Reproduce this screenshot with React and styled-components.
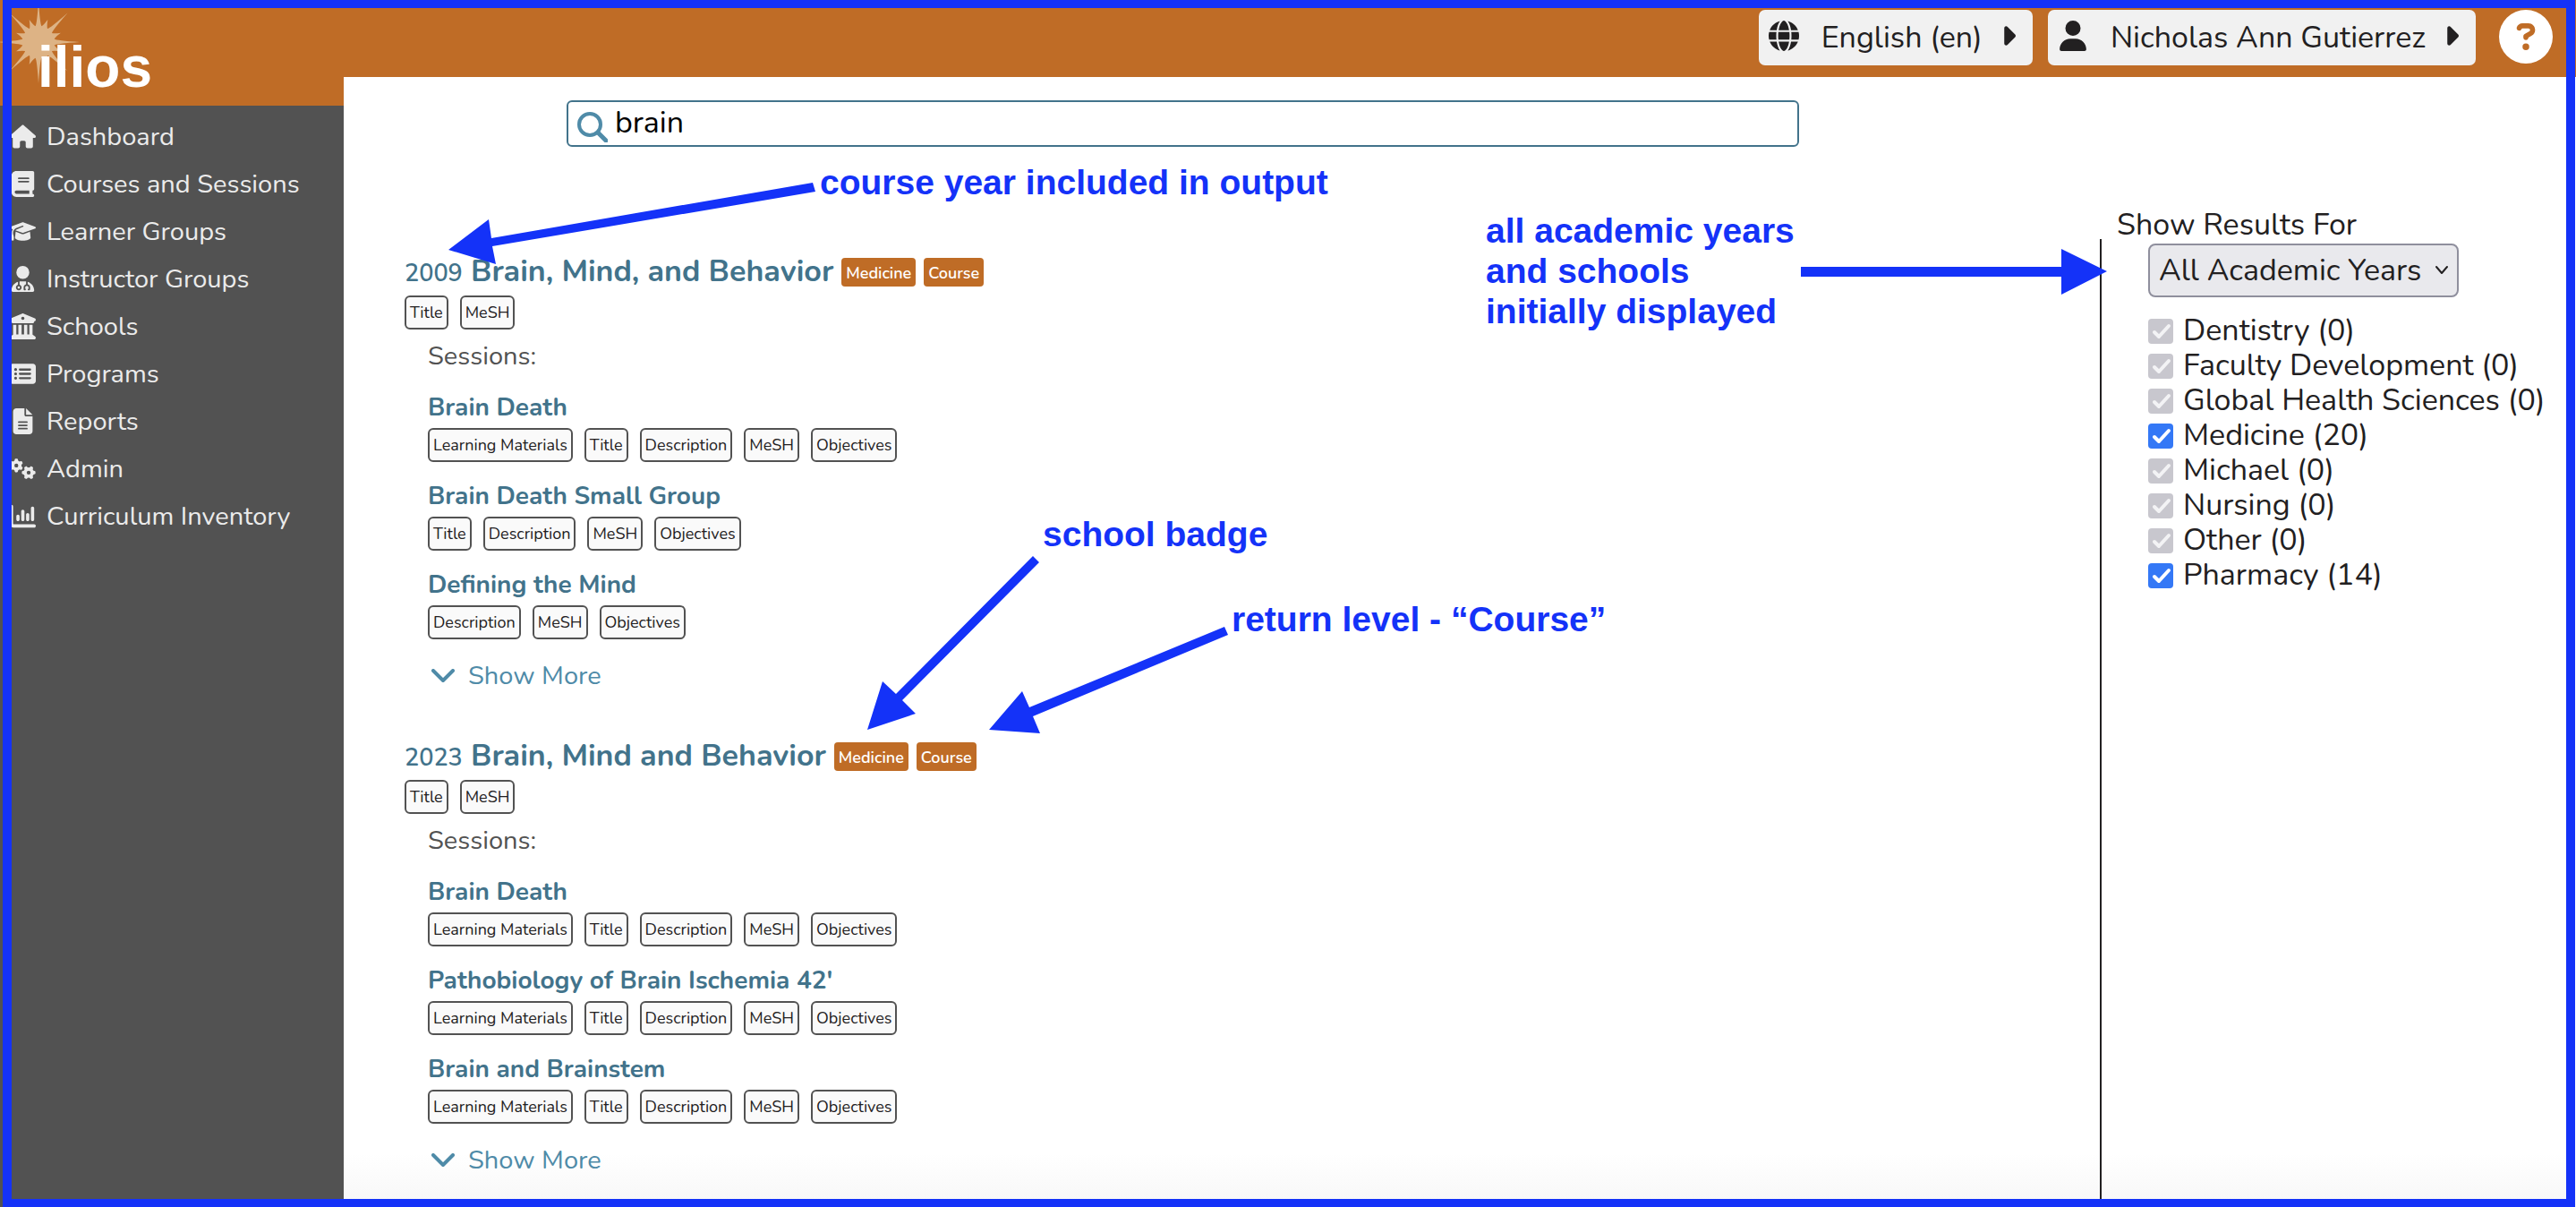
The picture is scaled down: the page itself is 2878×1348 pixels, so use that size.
import React from "react";
import styled, { createGlobalStyle } from "styled-components";
import {
  FaHouse,
  FaBook,
  FaGraduationCap,
  FaUserDoctor,
  FaBuildingColumns,
  FaRectangleList,
  FaFileLines,
  FaGears,
  FaChartColumn,
  FaGlobe,
  FaUser,
  FaCaretRight,
  FaCircleQuestion,
} from "react-icons/fa6";

const colors = {
  orange: "#bf6c26",
  sidebar: "#525252",
  link: "#42738b",
  linkLight: "#4f8ba8",
  text: "#222021",
  note: "#1432f8",
};

const GlobalStyle = createGlobalStyle`
  *, *::before, *::after { box-sizing: border-box; }
  body {
    margin: 0;
    background: #fff;
    color: ${colors.text};
    font-family: "Nunito", "Lato", sans-serif;
    font-size: 34px;
  }
  h1, h2, h3, p, ul { margin: 0; padding: 0; font-weight: 400; }
  ul { list-style: none; }
  a { color: inherit; text-decoration: none; }
  button, input, select { font: inherit; color: inherit; }
`;

const Page = styled.div`
  position: relative;
  display: grid;
  grid-template-columns: 384px minmax(0, 1fr);
  min-height: 100vh;
  overflow: hidden;
`;

/* Sidebar */

const Sidebar = styled.aside`
  background: ${colors.sidebar};
`;

const Logo = styled.a`
  position: relative;
  display: block;
  height: 118px;
  padding: 43px 0 0 42px;
  background: ${colors.orange};
  color: #fff;
  font: bold 64px/64px "Liberation Sans", Arial, sans-serif;
`;

const Sun = styled.svg`
  position: absolute;
  top: 0;
  left: 0;
  fill: #ddb385;
`;

const LogoText = styled.span`
  position: relative;
`;

const NavList = styled.ul`
  padding: 8px 0 0 8px;
`;

const NavLink = styled.a`
  display: flex;
  align-items: center;
  gap: 10px;
  height: 53px;
  color: #ebebeb;
  font-size: 29px;
  line-height: 53px;
  white-space: nowrap;
`;

const NavIcon = styled.span`
  display: flex;
  justify-content: center;
  width: 34px;
`;

/* Header */

const Main = styled.div`
  display: flex;
  flex-direction: column;
  background: linear-gradient(#fff, #f7f7f7) bottom / 100% 60px no-repeat;
`;

const Header = styled.header`
  display: flex;
  justify-content: flex-end;
  align-items: flex-start;
  gap: 17px;
  height: 86px;
  padding: 11px 26px 0 0;
  background: ${colors.orange};
`;

const MenuButton = styled.button`
  display: flex;
  align-items: center;
  height: 62px;
  padding: 0 19px 0 10px;
  border: 0;
  border-radius: 7px;
  background: #f1f1f1;
  white-space: nowrap;

  svg { margin-bottom: 4px; }
`;

const MenuIcon = styled.span`
  display: flex;
  justify-content: center;
  width: 36px;
  margin-right: 24px;
`;

const MenuLabel = styled.span`
  margin-right: 20px;
`;

const Caret = styled(FaCaretRight)`
  width: 17px;
  height: 34px;
`;

const HelpButton = styled.button`
  display: flex;
  margin-left: 9px;
  padding: 0;
  border: 0;
  background: none;
  color: #fff;
`;

/* Search */

const SearchForm = styled.form`
  padding: 26px 868px 0 249px;
`;

const SearchBox = styled.label`
  display: flex;
  align-items: center;
  gap: 8px;
  height: 52px;
  padding-left: 10px;
  border: 2px solid ${colors.link};
  border-radius: 6px;

  svg { flex: none; margin-top: 8px; }
`;

const SearchInput = styled.input`
  flex: 1;
  min-width: 0;
  height: 46px;
  margin-bottom: 2px;
  padding: 0;
  border: 0;
  outline: 0;
  background: none;
  color: #000;
  font-size: 34px;
`;

const Content = styled.div`
  display: flex;
  flex: 1;
`;

/* Results */

const Results = styled.main`
  display: flex;
  flex: 1;
  flex-direction: column;
  gap: 51px;
  min-width: 0;
  padding: 120px 0 0 68px;
`;

const CourseHeading = styled.div`
  display: flex;
  align-items: center;
  gap: 9px;
  height: 40px;
  margin-bottom: 6px;
  white-space: nowrap;
`;

const CourseTitle = styled.h2`
  color: ${colors.link};
  font-size: 34px;
  font-weight: 700;
  line-height: 40px;
`;

const Year = styled.span`
  font-size: 27px;
  font-weight: 600;
`;

const Badge = styled.span`
  height: 32px;
  padding: 0 5px;
  border-radius: 4px;
  background: ${colors.orange};
  color: #fff;
  font-size: 18px;
  font-weight: 600;
  line-height: 34px;
`;

const TagList = styled.ul`
  display: flex;
  gap: 13px;
`;

const Tag = styled.li`
  height: 38px;
  padding: 0 4px;
  border: 2px solid ${colors.sidebar};
  border-radius: 6px;
  background: #fafafa;
  font-size: 18px;
  line-height: 34px;
  white-space: nowrap;
`;

const Sessions = styled.div`
  display: flex;
  flex-direction: column;
  align-items: flex-start;
  gap: 20px;
  padding: 11px 0 0 26px;
`;

const SessionsLabel = styled.p`
  color: ${colors.sidebar};
  font-size: 29px;
  line-height: 38px;
`;

const SessionTitle = styled.h3`
  margin-bottom: 5px;
  color: ${colors.link};
  font-size: 28px;
  font-weight: 700;
  line-height: 36px;
`;

const ShowMore = styled.button`
  display: flex;
  align-items: center;
  gap: 15px;
  height: 40px;
  padding: 2px 0 0 4px;
  border: 0;
  background: none;
  color: ${colors.linkLight};
  font-size: 29px;
  line-height: 38px;
`;

/* Filters */

const Filters = styled.aside`
  display: flex;
  flex-direction: column;
  flex: 0 0 532px;
  padding-top: 71px;
`;

const FiltersTitle = styled.h2`
  padding-left: 19px;
  font-size: 34px;
  line-height: 32px;
`;

const FiltersPanel = styled.div`
  flex: 1;
  padding: 5px 0 0 52px;
  border-left: 2px solid ${colors.text};
`;

const SelectBox = styled.label`
  display: inline-grid;
  align-items: center;
  width: 347px;
  margin-bottom: 18px;

  > * { grid-area: 1 / 1; }
  svg { justify-self: end; margin-right: 11px; pointer-events: none; }
`;

const YearSelect = styled.select`
  appearance: none;
  width: 100%;
  height: 60px;
  padding: 0 40px 0 10px;
  border: 2px solid #8f8f9d;
  border-radius: 8px;
  background: #e9e9ed;
  font-size: 34px;
`;

const SchoolLabel = styled.label`
  display: flex;
  align-items: center;
  gap: 11px;
  height: 39px;
  line-height: 39px;
  white-space: nowrap;
`;

const CheckCell = styled.span`
  display: grid;
  width: 28px;
  height: 28px;

  > * { grid-area: 1 / 1; }
  svg { pointer-events: none; }
`;

const Checkbox = styled.input`
  appearance: none;
  width: 28px;
  height: 28px;
  margin: 0;
  border-radius: 4px;
  background: #3478f6;

  &:disabled { background: #c8c7ce; }
`;

/* Notes drawn over the page */

const Frame = styled.div`
  position: absolute;
  inset: 0 1px 0 3px;
  border: solid ${colors.note};
  border-width: 9px 10px;
  pointer-events: none;
`;

const Arrows = styled.svg`
  position: absolute;
  top: 0;
  left: 0;
  fill: ${colors.note};
  pointer-events: none;
`;

const Note = styled.p`
  position: absolute;
  top: ${(p) => p.$top}px;
  left: ${(p) => p.$left}px;
  color: ${colors.note};
  font: bold 39px/45px "Liberation Sans", Arial, sans-serif;
  white-space: pre;
`;

const navItems = [
  ["Dashboard", FaHouse],
  ["Courses and Sessions", FaBook],
  ["Learner Groups", FaGraduationCap],
  ["Instructor Groups", FaUserDoctor],
  ["Schools", FaBuildingColumns],
  ["Programs", FaRectangleList],
  ["Reports", FaFileLines],
  ["Admin", FaGears],
  ["Curriculum Inventory", FaChartColumn],
];

const allTags = ["Learning Materials", "Title", "Description", "MeSH", "Objectives"];

const courses = [
  {
    year: 2009,
    title: "Brain, Mind, and Behavior",
    sessions: [
      ["Brain Death", allTags],
      ["Brain Death Small Group", allTags.slice(1)],
      ["Defining the Mind", allTags.slice(2)],
    ],
  },
  {
    year: 2023,
    title: "Brain, Mind and Behavior",
    sessions: [
      ["Brain Death", allTags],
      ["Pathobiology of Brain Ischemia 42'", allTags],
      ["Brain and Brainstem", allTags],
    ],
  },
];

const schools = [
  ["Dentistry", 0],
  ["Faculty Development", 0],
  ["Global Health Sciences", 0],
  ["Medicine", 20],
  ["Michael", 0],
  ["Nursing", 0],
  ["Other", 0],
  ["Pharmacy", 14],
];

const notes = [
  [181, 916, "course year included in output"],
  [235, 1660, "all academic years\nand schools\ninitially displayed"],
  [574, 1165, "school badge"],
  [669, 1376, "return level - “Course”"],
];

const arrows = [
  "908,204 911,214 550,275 554,295 501,279 546,245 549,266",
  "2012,298 2303,298 2303,278 2354,303 2303,329 2303,309 2012,309",
  "1154,621 1161,628 1008,782 1023,797 969,815 986,761 1001,775",
  "1368,700 1372,709 1154,800 1162,819 1105,815 1142,772 1150,790",
];

function sunPath(cx, cy) {
  const at = (radius, degrees) => {
    const a = (degrees * Math.PI) / 180;
    return `${(cx + radius * Math.sin(a)).toFixed(1)} ${(cy - radius * Math.cos(a)).toFixed(1)}`;
  };
  let d = `M${at(18, -11.25)}`;
  for (let i = 0; i < 16; i += 1) {
    const angle = i * 22.5;
    const tip = i % 2 === 0 ? 46 : 27;
    d += `Q${at(20, angle - 5)} ${at(tip, angle)}Q${at(20, angle + 5)} ${at(18, angle + 11.25)}`;
  }
  return `${d}Z`;
}

function TagRow({ tags }) {
  return (
    <TagList>
      {tags.map((tag) => (
        <Tag key={tag}>{tag}</Tag>
      ))}
    </TagList>
  );
}

function Course({ course }) {
  return (
    <article>
      <CourseHeading>
        <CourseTitle>
          <a href="#course">
            <Year>{course.year}</Year> {course.title}
          </a>
        </CourseTitle>
        <Badge>Medicine</Badge>
        <Badge>Course</Badge>
      </CourseHeading>
      <TagRow tags={["Title", "MeSH"]} />
      <Sessions>
        <SessionsLabel>Sessions:</SessionsLabel>
        {course.sessions.map(([title, tags]) => (
          <section key={title}>
            <SessionTitle>
              <a href="#session">{title}</a>
            </SessionTitle>
            <TagRow tags={tags} />
          </section>
        ))}
        <ShowMore type="button">
          <svg width="26" height="16" viewBox="0 0 26 16" fill="none" stroke="currentColor" strokeWidth="4" aria-hidden="true">
            <path d="M2 2l11 11L24 2" strokeLinecap="round" strokeLinejoin="round" />
          </svg>
          Show More
        </ShowMore>
      </Sessions>
    </article>
  );
}

export default function App() {
  return (
    <Page>
      <GlobalStyle />
      <Sidebar>
        <Logo href="#home">
          <Sun width="100" height="110" aria-hidden="true">
            <path d={sunPath(43, 47)} />
          </Sun>
          <LogoText>ilios</LogoText>
        </Logo>
        <nav>
          <NavList>
            {navItems.map(([label, Icon]) => (
              <li key={label}>
                <NavLink href="#nav">
                  <NavIcon>
                    <Icon size={29} />
                  </NavIcon>
                  {label}
                </NavLink>
              </li>
            ))}
          </NavList>
        </nav>
      </Sidebar>

      <Main>
        <Header>
          <MenuButton type="button">
            <MenuIcon>
              <FaGlobe size={34} />
            </MenuIcon>
            <MenuLabel>English (en)</MenuLabel>
            <Caret />
          </MenuButton>
          <MenuButton type="button">
            <MenuIcon>
              <FaUser size={34} />
            </MenuIcon>
            <MenuLabel>Nicholas Ann Gutierrez</MenuLabel>
            <Caret />
          </MenuButton>
          <HelpButton type="button" aria-label="Help">
            <FaCircleQuestion size={60} />
          </HelpButton>
        </Header>

        <SearchForm>
          <SearchBox>
            <svg width="34" height="34" viewBox="0 0 34 34" fill="none" stroke={colors.linkLight} aria-hidden="true">
              <circle cx="14" cy="14" r="12" strokeWidth="4" />
              <path d="M23 23l9 9" strokeWidth="5" strokeLinecap="round" />
            </svg>
            <SearchInput type="search" aria-label="Search" defaultValue="brain" />
          </SearchBox>
        </SearchForm>

        <Content>
          <Results>
            {courses.map((course) => (
              <Course key={course.year} course={course} />
            ))}
          </Results>
          <Filters>
            <FiltersTitle>Show Results For</FiltersTitle>
            <FiltersPanel>
              <SelectBox>
                <YearSelect aria-label="Academic year">
                  <option>All Academic Years</option>
                </YearSelect>
                <svg width="16" height="12" viewBox="0 0 16 12" fill="none" stroke={colors.text} strokeWidth="2" aria-hidden="true">
                  <path d="M2 2l6 7 6-7" strokeLinecap="round" strokeLinejoin="round" />
                </svg>
              </SelectBox>
              {schools.map(([name, count]) => (
                <SchoolLabel key={name}>
                  <CheckCell>
                    <Checkbox type="checkbox" defaultChecked disabled={count === 0} />
                    <svg width="28" height="28" fill="none" stroke={count ? "#fff" : "#f3f3f5"} strokeWidth="4" aria-hidden="true">
                      <path d="M7 15l5 5 11-12" strokeLinecap="round" strokeLinejoin="round" />
                    </svg>
                  </CheckCell>
                  {name} ({count})
                </SchoolLabel>
              ))}
            </FiltersPanel>
          </Filters>
        </Content>
      </Main>

      <Arrows width="2400" height="900" aria-hidden="true">
        {arrows.map((points) => (
          <polygon key={points} points={points} />
        ))}
      </Arrows>
      {notes.map(([top, left, text]) => (
        <Note key={text} $top={top} $left={left}>
          {text}
        </Note>
      ))}
      <Frame />
    </Page>
  );
}
